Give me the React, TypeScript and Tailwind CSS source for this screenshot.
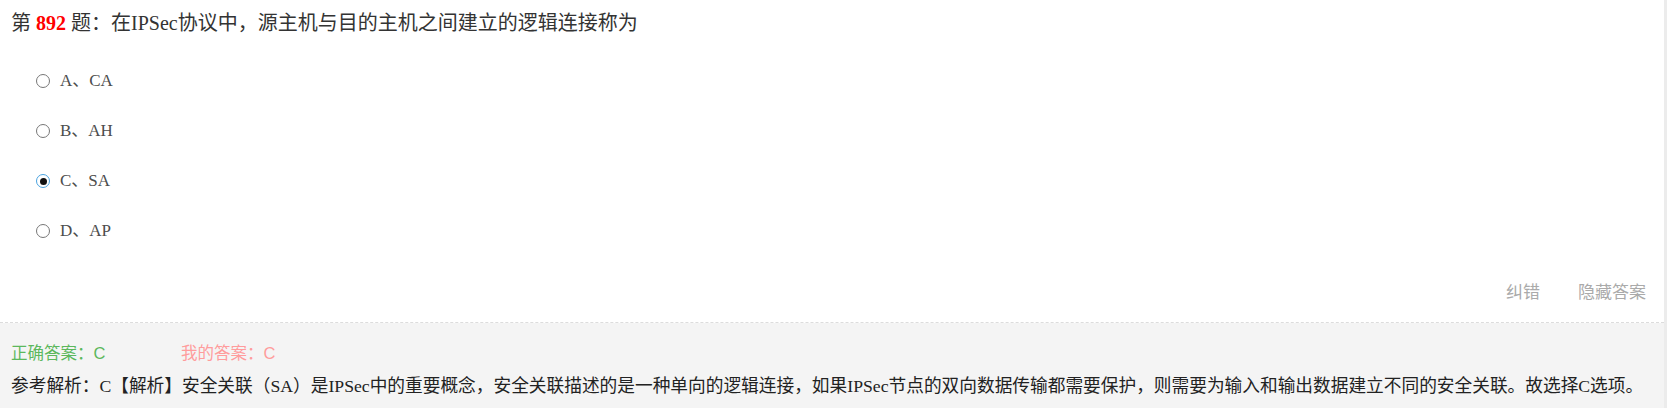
const options = [
  { key: "A", text: "CA" },
  { key: "B", text: "AH" },
  { key: "C", text: "SA" },
  { key: "D", text: "AP" },
];

const selected = "C";

function Radio({ checked }: { checked: boolean }) {
  if (checked) {
    return (
      <span className="flex h-[14px] w-[14px] shrink-0 items-center justify-center rounded-full border border-[#4aa3e0] bg-white">
        <span className="h-[7px] w-[7px] rounded-full bg-[#111]" />
      </span>
    );
  }
  return <span className="h-[14px] w-[14px] shrink-0 rounded-full border border-[#777] bg-white" />;
}

export default function App() {
  return (
    <div className="flex w-[1667px] bg-white font-['Liberation_Serif','Noto_Sans_CJK_SC',serif] text-[#333]">
      <div className="flex-1">
        <div className="border-b border-dashed border-[#dcdcdc]">
          <div className="h-[50px] whitespace-nowrap pl-[11px] pt-[11px] text-[20px] leading-[24px]">
            第 <span className="font-bold text-[#ff0000]">892</span> 题：在IPSec协议中，源主机与目的主机之间建立的逻辑连接称为
          </div>

          <div className="pt-[6px]">
            {options.map((o) => (
              <label key={o.key} className="flex h-[50px] items-center pl-[36px] text-[17px] text-[#4d4d4d]">
                <Radio checked={o.key === selected} />
                <span className="ml-[10px]">
                  {o.key}、{o.text}
                </span>
              </label>
            ))}
          </div>

          <div className="mb-[9px] mt-[17px] flex h-[40px] items-center justify-end gap-[38px] pr-[18px] font-['Liberation_Sans','Noto_Sans_CJK_SC',sans-serif] text-[17px] text-[#aaa]">
            <span>纠错</span>
            <span>隐藏答案</span>
          </div>
        </div>

        <div className="h-[85px] bg-[#f4f4f4] pl-[11px] pt-[19px]">
          <div className="flex h-[22px] items-center font-['Liberation_Sans','Noto_Sans_CJK_SC',sans-serif] text-[16.5px]">
            <span className="w-[170px] text-[#5cb85c]">正确答案：C</span>
            <span className="text-[#ff9c9c]">我的答案：C</span>
          </div>
          <p className="mt-[10px] whitespace-nowrap text-[17.7px] leading-[24px] text-[#222]">
            参考解析：C【解析】安全关联（SA）是IPSec中的重要概念，安全关联描述的是一种单向的逻辑连接，如果IPSec节点的双向数据传输都需要保护，则需要为输入和输出数据建立不同的安全关联。故选择C选项。
          </p>
        </div>
      </div>
      <div className="w-[3px] bg-[#ececec]" />
    </div>
  );
}
